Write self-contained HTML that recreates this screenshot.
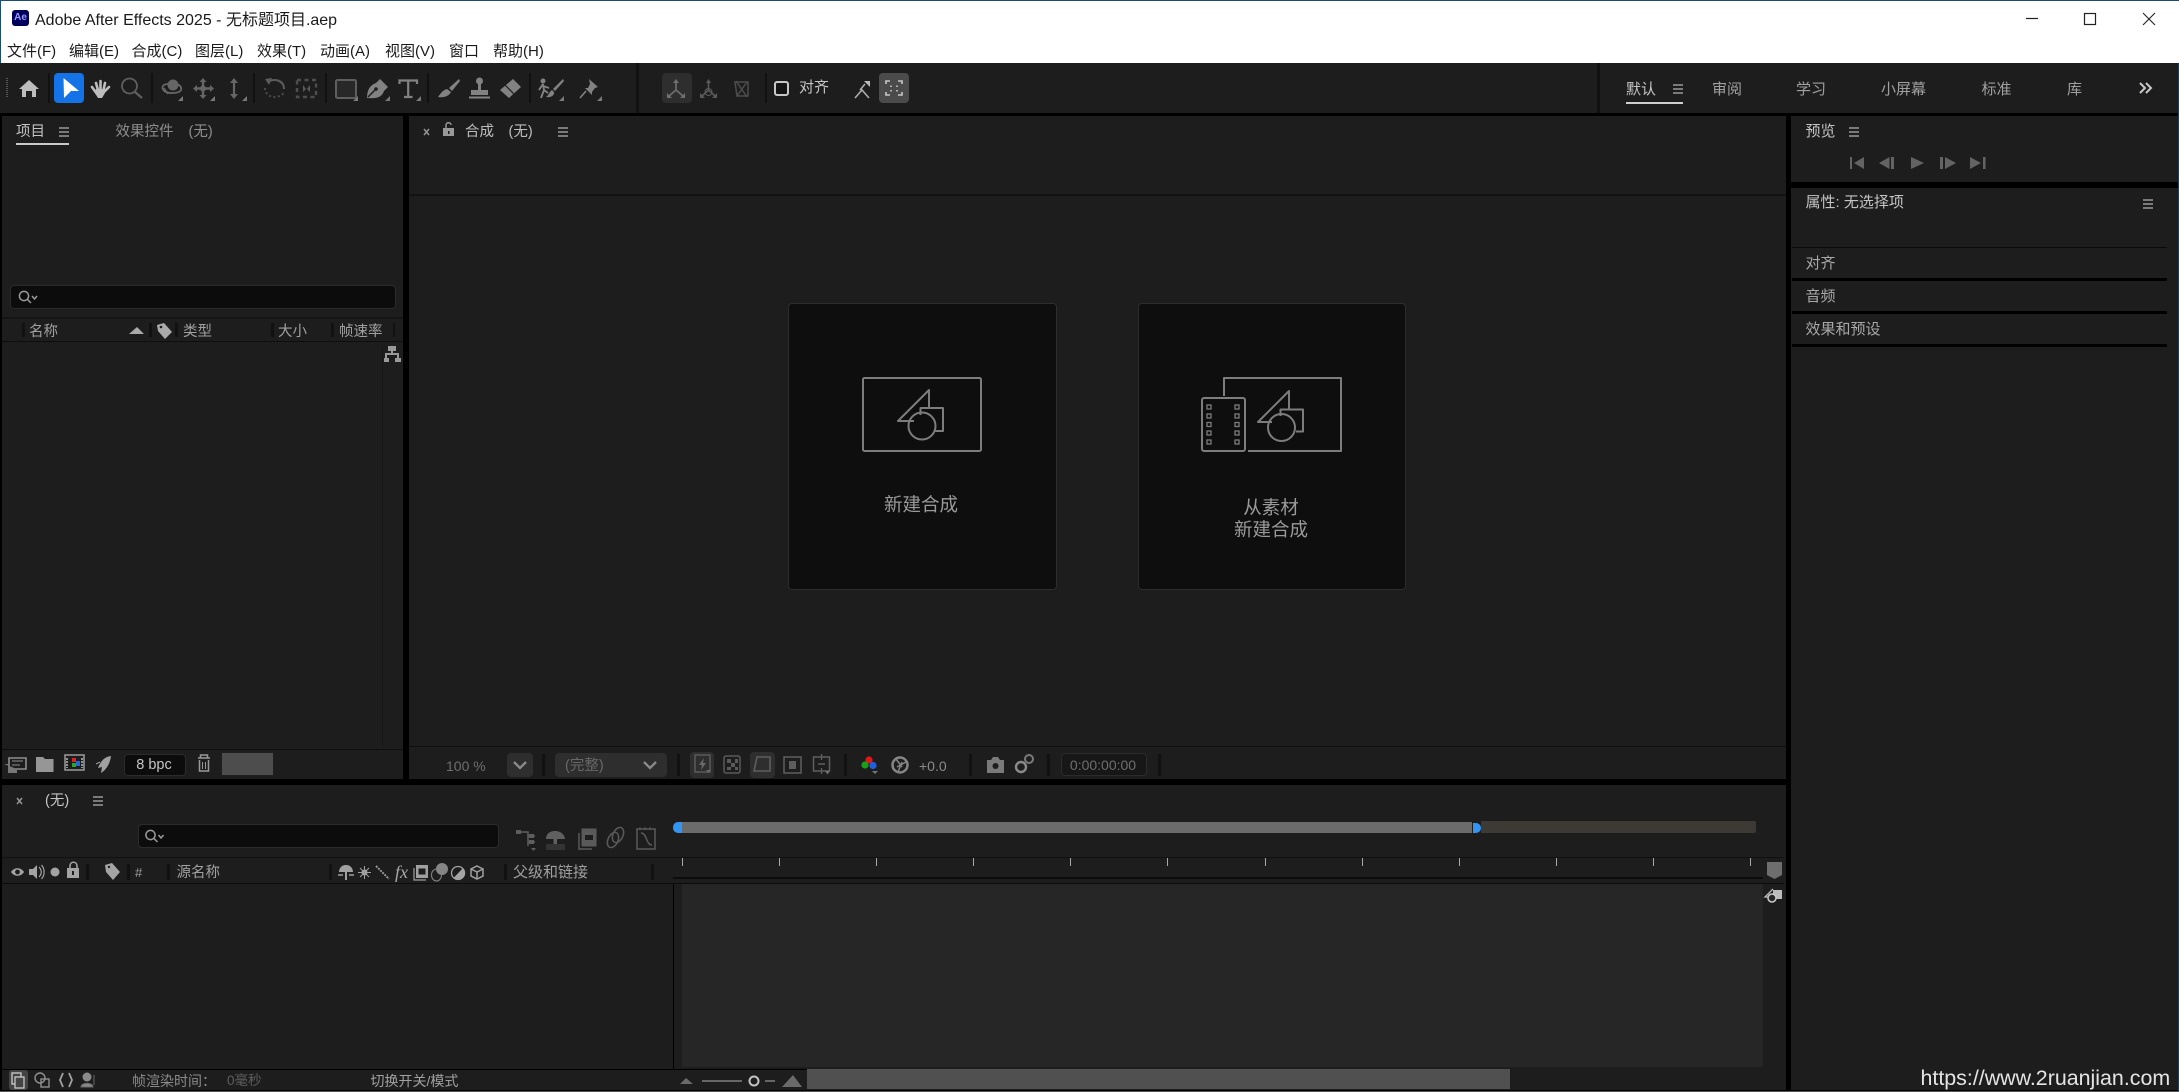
<!DOCTYPE html>
<html lang="zh"><head><meta charset="utf-8"><title>Adobe After Effects 2025</title>
<style>
html,body{margin:0;padding:0;background:#000;width:2179px;height:1092px;overflow:hidden}
body{position:relative;font-family:"Liberation Sans","Noto Sans CJK SC",sans-serif;font-size:14.5px;color:#b0b0b0}
.b{position:absolute;box-sizing:border-box}
.t{position:absolute;white-space:nowrap;line-height:20px;height:20px;margin-top:1px;margin-left:-1px}
.h{position:absolute;width:10px;height:10px;background:repeating-linear-gradient(#7a7a7a 0 2px,transparent 2px 4px)}
.s{position:absolute;background:#111;width:3px}
.m{color:#1a1a1a;font-size:15px}
.d{color:#8e8e8e}.l{color:#c4c4c4}
.i{position:absolute;left:0;top:0}
</style></head><body>
<!-- title bar -->
<div class="b" style="left:0;top:0;width:2179px;height:63px;background:#fff"></div>
<div class="b" style="left:0;top:0;width:2179px;height:1px;background:#1b4d6e"></div>
<div class="b" style="left:0;top:0;width:1px;height:63px;background:#1b4d6e"></div>
<div class="b" style="left:12px;top:10px;width:17px;height:16px;background:#00005b;border-radius:3px;color:#9a9aff;font-size:10px;font-weight:bold;text-align:center;line-height:16px">Ae</div>
<div class="t" style="left:35px;top:10px;font-size:16px;color:#1a1a1a;margin-left:0">Adobe After Effects 2025 - 无标题项目.aep</div>
<div class="t m" style="left:8px;top:41px">文件(F)</div>
<div class="t m" style="left:70px;top:41px">编辑(E)</div>
<div class="t m" style="left:132.5px;top:41px">合成(C)</div>
<div class="t m" style="left:196px;top:41px">图层(L)</div>
<div class="t m" style="left:258px;top:41px">效果(T)</div>
<div class="t m" style="left:321px;top:41px">动画(A)</div>
<div class="t m" style="left:386px;top:41px">视图(V)</div>
<div class="t m" style="left:450px;top:41px">窗口</div>
<div class="t m" style="left:494px;top:41px">帮助(H)</div>

<!-- toolbar -->
<div class="b" style="left:0;top:63px;width:2179px;height:50px;background:#1d1d1d"></div>
<div class="b" style="left:54px;top:73px;width:30px;height:30px;background:#1473e6;border-radius:4px"></div>
<div class="b" style="left:662px;top:73px;width:30px;height:30px;background:#2e2e2e;border-radius:4px"></div>
<div class="b" style="left:879px;top:73px;width:30px;height:30px;background:#4b4b4b;border-radius:4px"></div>
<div class="s" style="left:636px;top:63px;height:50px"></div>
<div class="s" style="left:1597px;top:63px;height:50px"></div>
<div class="s" style="left:48px;top:73px;height:30px;width:2px"></div>
<div class="s" style="left:151px;top:73px;height:30px;width:2px"></div>
<div class="s" style="left:253px;top:73px;height:30px;width:2px"></div>
<div class="s" style="left:325px;top:73px;height:30px;width:2px"></div>
<div class="s" style="left:427px;top:73px;height:30px;width:2px"></div>
<div class="s" style="left:529px;top:73px;height:30px;width:2px"></div>
<div class="s" style="left:765px;top:73px;height:30px;width:2px"></div>
<div class="b" style="left:774px;top:81px;width:15px;height:15px;border:2.5px solid #c8c8c8;border-radius:3px;background:#151515"></div>
<div class="t l" style="left:800px;top:77px;font-size:15px">对齐</div>
<div class="t l" style="left:1627px;top:78.5px;font-size:15px">默认</div>
<div class="h" style="left:1673px;top:84px"></div>
<div class="b" style="left:1626px;top:102px;width:57px;height:2px;background:#d0d0d0"></div>
<div class="t d" style="left:1713px;top:78.5px;font-size:15px;color:#a0a0a0">审阅</div>
<div class="t d" style="left:1797px;top:78.5px;font-size:15px;color:#a0a0a0">学习</div>
<div class="t d" style="left:1882px;top:78.5px;font-size:15px;color:#a0a0a0">小屏幕</div>
<div class="t d" style="left:1982.5px;top:78.5px;font-size:15px;color:#a0a0a0">标准</div>
<div class="t d" style="left:2068px;top:78.5px;font-size:15px;color:#a0a0a0">库</div>

<!-- project panel -->
<div class="b" style="left:2px;top:116px;width:401px;height:663px;background:#1d1d1d"></div>
<div class="t l" style="left:17px;top:121px">项目</div>
<div class="h" style="left:59px;top:127px"></div>
<div class="b" style="left:16px;top:143px;width:53px;height:2px;background:#c8c8c8"></div>
<div class="t d" style="left:116.5px;top:121px">效果控件</div>
<div class="t d" style="left:189.5px;top:121px">(无)</div>
<div class="b" style="left:10px;top:285px;width:386px;height:24px;background:#0c0c0c;border:1px solid #2b2b2b;border-radius:4px"></div>
<div class="b" style="left:2px;top:317px;width:401px;height:2px;background:#151515"></div>
<div class="b" style="left:2px;top:341px;width:401px;height:1px;background:#0e0e0e"></div>
<div class="s" style="left:22px;top:323px;height:14px"></div>
<div class="s" style="left:149px;top:323px;height:14px"></div>
<div class="s" style="left:175px;top:323px;height:14px"></div>
<div class="s" style="left:271px;top:323px;height:14px"></div>
<div class="s" style="left:331px;top:323px;height:14px"></div>
<div class="s" style="left:393px;top:323px;height:14px;width:2px"></div>
<div class="t d" style="left:30px;top:321px;color:#a0a0a0">名称</div>
<div class="t d" style="left:184px;top:321px;color:#a0a0a0">类型</div>
<div class="t d" style="left:279px;top:321px;color:#a0a0a0">大小</div>
<div class="t d" style="left:340px;top:321px;color:#a0a0a0">帧速率</div>
<div class="b" style="left:382px;top:346px;width:1px;height:400px;background:#161616"></div>
<div class="b" style="left:2px;top:749px;width:401px;height:1px;background:#0e0e0e"></div>
<div class="b" style="left:123.5px;top:754px;width:62.5px;height:22px;background:#0c0c0c;border:1px solid #2b2b2b;border-radius:4px"></div>
<div class="t l" style="left:124px;top:754px;width:62px;text-align:center">8 bpc</div>
<div class="b" style="left:222px;top:753px;width:51px;height:22px;background:#4d4d4d"></div>

<!-- comp panel -->
<div class="b" style="left:409px;top:116px;width:1377px;height:663px;background:#1d1d1d"></div>
<div class="t" style="left:466px;top:121px;color:#bdbdbd">合成</div>
<div class="t" style="left:509.5px;top:121px;color:#bdbdbd">(无)</div>
<div class="h" style="left:558px;top:127px"></div>
<div class="b" style="left:409px;top:194px;width:1377px;height:2px;background:#131313"></div>
<div class="b" style="left:788px;top:302.5px;width:268.5px;height:287px;background:#0e0e0e;border:1px solid #2d2d2d;border-radius:4px"></div>
<div class="b" style="left:1137.5px;top:302.5px;width:268.5px;height:287px;background:#0e0e0e;border:1px solid #2d2d2d;border-radius:4px"></div>
<div class="t" style="left:788px;top:494px;width:268px;text-align:center;font-size:18.5px;color:#9a9a9a">新建合成</div>
<div class="t" style="left:1138px;top:497px;width:268px;text-align:center;font-size:18.5px;color:#9a9a9a">从素材</div>
<div class="t" style="left:1138px;top:518.5px;width:268px;text-align:center;font-size:18.5px;color:#9a9a9a">新建合成</div>
<div class="b" style="left:409px;top:746px;width:1377px;height:1px;background:#101010"></div>
<div class="t" style="left:447px;top:755px;font-size:14px;color:#6e6e6e">100 %</div>
<div class="b" style="left:507px;top:753px;width:26px;height:24px;background:#2e2e2e;border-radius:4px"></div>
<div class="b" style="left:555px;top:753px;width:112px;height:24px;background:#2e2e2e;border-radius:4px"></div>
<div class="t" style="left:566px;top:755px;color:#686868">(完整)</div>
<div class="b" style="left:690px;top:752px;width:24px;height:26px;background:#2e2e2e;border-radius:4px"></div>
<div class="b" style="left:750px;top:752px;width:25px;height:26px;background:#2e2e2e;border-radius:4px"></div>
<div class="s" style="left:542px;top:754px;height:22px"></div>
<div class="s" style="left:677px;top:754px;height:22px"></div>
<div class="s" style="left:844px;top:754px;height:22px"></div>
<div class="s" style="left:969px;top:754px;height:22px"></div>
<div class="s" style="left:1047px;top:754px;height:22px"></div>
<div class="s" style="left:1158px;top:754px;height:22px"></div>
<div class="t" style="left:920px;top:755px;font-size:14px;color:#8a8a8a">+0.0</div>
<div class="b" style="left:1061px;top:753px;width:86px;height:23px;background:#171717;border:1px solid #2b2b2b;border-radius:4px"></div>
<div class="t" style="left:1061px;top:754px;width:86px;text-align:center;font-size:14px;color:#6e6e6e">0:00:00:00</div>

<!-- right panels -->
<div class="b" style="left:1791px;top:116px;width:387px;height:66px;background:#1d1d1d"></div>
<div class="t l" style="left:1806.5px;top:120.5px;font-size:15px">预览</div>
<div class="h" style="left:1849px;top:127px"></div>
<div class="b" style="left:1791px;top:188px;width:387px;height:902px;background:#1d1d1d"></div>
<div class="t l" style="left:1806.5px;top:191.5px;font-size:15px">属性: 无选择项</div>
<div class="h" style="left:2143px;top:199px"></div>
<div class="b" style="left:1792px;top:247px;width:375px;height:1px;background:#0a0a0a"></div>
<div class="t" style="left:1806.5px;top:253px;font-size:15px;color:#a8a8a8">对齐</div>
<div class="b" style="left:1792px;top:278px;width:375px;height:3px;background:#000"></div>
<div class="t" style="left:1806.5px;top:286px;font-size:15px;color:#a8a8a8">音频</div>
<div class="b" style="left:1792px;top:311px;width:375px;height:3px;background:#000"></div>
<div class="t" style="left:1806.5px;top:319px;font-size:15px;color:#a8a8a8">效果和预设</div>
<div class="b" style="left:1792px;top:344px;width:375px;height:3px;background:#000"></div>

<!-- timeline panel -->
<div class="b" style="left:2px;top:785px;width:1784px;height:305px;background:#1d1d1d"></div>
<div class="t" style="left:46px;top:790px;color:#c4c4c4">(无)</div>
<div class="h" style="left:93px;top:796px"></div>
<div class="b" style="left:138px;top:824px;width:361px;height:24px;background:#0c0c0c;border:1px solid #2b2b2b;border-radius:4px"></div>
<div class="b" style="left:2px;top:857px;width:1782px;height:1px;background:#111"></div>
<div class="b" style="left:2px;top:883px;width:1782px;height:1px;background:#0c0c0c"></div>
<div class="b" style="left:673px;top:877px;width:1090px;height:2px;background:#0c0c0c"></div>
<div class="s" style="left:86px;top:864px;height:16px"></div>
<div class="s" style="left:127px;top:864px;height:16px"></div>
<div class="s" style="left:167px;top:864px;height:16px"></div>
<div class="s" style="left:329px;top:864px;height:16px"></div>
<div class="s" style="left:504px;top:864px;height:16px"></div>
<div class="s" style="left:651px;top:864px;height:16px"></div>
<div class="t d" style="left:136px;top:862px;color:#a0a0a0;font-size:13px">#</div>
<div class="t" style="left:177.5px;top:862px;color:#a0a0a0">源名称</div>
<div class="t" style="left:514px;top:862px;color:#a0a0a0;font-size:15px">父级和链接</div>
<div class="b" style="left:673px;top:822px;width:9px;height:11px;background:#3196f3;border-radius:5px 0 0 5px"></div>
<div class="b" style="left:682px;top:822px;width:790px;height:11px;background:#6b6b6b"></div>
<div class="b" style="left:1473px;top:823px;width:8px;height:10px;background:#3196f3;border-radius:0 5px 5px 0"></div>
<div class="b" style="left:1481px;top:821px;width:275px;height:12px;background:#3d3a35;border-radius:0 2px 2px 0"></div>
<div class="b" style="left:682px;top:884px;width:1081px;height:183px;background:#262626"></div>
<div class="b" style="left:673px;top:884px;width:1px;height:185px;background:#000"></div>
<div class="b" style="left:2px;top:1069px;width:1170px;height:1px;background:#000"></div>
<div class="b" style="left:8.5px;top:1070px;width:19px;height:20px;background:#444;border-radius:3px"></div>
<div class="t" style="left:133px;top:1069.5px;color:#8a8a8a;font-size:14px">帧渲染时间：</div>
<div class="t" style="left:228px;top:1069.5px;color:#5e5e5e;font-size:13.5px">0毫秒</div>
<div class="t" style="left:371.5px;top:1069.5px;color:#a0a0a0;font-size:14px">切换开关/模式</div>
<div class="b" style="left:807px;top:1069px;width:703px;height:20px;background:#505050"></div>
<div class="t" style="left:1920.5px;top:1066.5px;font-size:21.4px;color:#e4e4e4;z-index:3;margin-left:0">https://www.2ruanjian.com</div>
<div class="b" style="left:2178px;top:63px;width:1px;height:1029px;background:#1b3f5e"></div>
<div class="b" style="left:0;top:1091px;width:2179px;height:1px;background:#555"></div>

<!-- icons -->
<svg class="i" width="2179" height="1092" viewBox="0 0 2179 1092" fill="none">
<!-- card 1 icon -->
<g stroke="#7d7d7d" stroke-width="2" stroke-linejoin="round">
<rect x="863" y="378" width="118" height="73" rx="1.5"/>
<path d="M929 408V390L898 421H914"/>
<path d="M920.5 415V408H943V431H935.5"/>
<circle cx="922" cy="426" r="13.5"/>
</g>
<!-- card 2 icon -->
<g stroke="#7d7d7d" stroke-width="2" stroke-linejoin="round">
<path d="M1224 396V378H1341V451H1248"/>
<rect x="1202" y="398" width="43" height="53" rx="2"/>
<path d="M1289 409V391L1258 422H1272"/>
<path d="M1280.5 416V409.5H1303V431.5H1296"/>
<circle cx="1281.5" cy="427.5" r="13.5"/>
</g>
<g stroke="#7d7d7d" stroke-width="1.3">
<rect x="1207" y="405" width="4" height="4"/><rect x="1207" y="414" width="4" height="4"/><rect x="1207" y="422.5" width="4" height="4"/><rect x="1207" y="431" width="4" height="4"/><rect x="1207" y="440" width="4" height="4"/>
<rect x="1235" y="405" width="4" height="4"/><rect x="1235" y="414" width="4" height="4"/><rect x="1235" y="422.5" width="4" height="4"/><rect x="1235" y="431" width="4" height="4"/><rect x="1235" y="440" width="4" height="4"/>
</g>
<!-- window controls -->
<path d="M2026 18.5H2038" stroke="#222" stroke-width="1.2"/>
<rect x="2084.5" y="13.5" width="11" height="11" stroke="#222" stroke-width="1.2"/>
<path d="M2143 13L2155 25M2155 13L2143 25" stroke="#222" stroke-width="1.1"/>
<!-- grip -->
<path d="M7 78V97" stroke="#555" stroke-width="2" stroke-dasharray="1 1"/>
<!-- home -->
<path d="M19 89L29 80L39 89H36V97H32V91H26V97H22V89Z" fill="#bdbdbd"/>
<!-- arrow -->
<path d="M63.5 78L79 91H71L64 98Z" fill="#fff"/>
<!-- hand -->
<path d="M92 87L97 94M96 83L98 90M100.5 81V90M105 83L103.5 90M109 87L104 92" stroke="#bdbdbd" stroke-width="2.6" stroke-linecap="round"/>
<path d="M96 89H105V93L102 98H98L95 93Z" fill="#bdbdbd"/>
<!-- zoom -->
<circle cx="129.5" cy="86" r="7.5" stroke="#5e5e5e" stroke-width="1.8"/><path d="M135 92L142 98" stroke="#5e5e5e" stroke-width="2.2"/>
<!-- roto orbit -->
<circle cx="173" cy="85" r="5.5" fill="#666"/><path d="M168 84C161 84 161 90 166 92C171 94 180 93 181 90C182 87 179 84 176 84" stroke="#666" stroke-width="1.8"/>
<path d="M164 88L168 94" stroke="#666" stroke-width="1.5"/>
<!-- pan -->
<path d="M203 80V97M195 88.5H212" stroke="#666" stroke-width="2.4"/>
<path d="M203 78L206.5 82H199.5ZM203 99L206.5 95H199.5ZM193 88.5L197 85V92ZM214 88.5L210 85V92Z" fill="#666"/>
<circle cx="203" cy="88.5" r="3" fill="#666"/>
<!-- dolly -->
<path d="M234 81V96" stroke="#666" stroke-width="2.2"/><path d="M234 78L238 83H230ZM234 99L238 94H230Z" fill="#666"/>
<!-- rotate -->
<path d="M268 82C274 78 284 80 284 89" stroke="#5c5c5c" stroke-width="2"/>
<path d="M265 79L272 78L269 85Z" fill="#5c5c5c"/>
<path d="M265 88C265 96 275 101 284 93" stroke="#4c4c4c" stroke-width="2" stroke-dasharray="2 2.5"/>
<!-- scale -->
<rect x="297" y="80" width="19" height="17" stroke="#4e4e4e" stroke-width="2.4" stroke-dasharray="4 3.5"/>
<path d="M303 85L306 89L303 92ZM310 85L307 89L310 92Z" fill="#5a5a5a"/>
<!-- rect -->
<rect x="336" y="80" width="20" height="18" rx="1.5" fill="#282828" stroke="#5e5e5e" stroke-width="2"/>
<!-- pen -->
<path d="M367 98C367 90 370 85 376 83L380 79L388 87L384 91C382 97 377 99 367 98Z" fill="#828282"/><path d="M368 97L375 90" stroke="#1d1d1d" stroke-width="1.4"/><circle cx="376" cy="89" r="1.8" fill="#1d1d1d"/>
<!-- T -->
<path d="M399.5 84V80.5H417V84M408.2 81V96.5M404 97H412.5" stroke="#828282" stroke-width="2.2"/>
<!-- brush -->
<path d="M459 79L449 88L452 91L460 81Z" fill="#828282"/><path d="M447 89C443 90 441 93 438 97C444 98 449 96 451 92Z" fill="#828282"/>
<!-- stamp -->
<circle cx="479.5" cy="81" r="3.5" fill="#828282"/><path d="M478 84H481V90H488V95H471V90H478ZM469 96.5H490V98.5H469Z" fill="#828282"/>
<!-- eraser -->
<path d="M513 79L521 87L509 98L500 90Z" fill="#828282"/><path d="M505 85L514 94" stroke="#1d1d1d" stroke-width="1.2"/>
<!-- roto brush -->
<circle cx="543" cy="81" r="2.5" fill="#828282"/><path d="M543 84L539 90M543 84L544 90L541 98M544 90L548 93M543 86L549 88" stroke="#828282" stroke-width="1.9"/>
<path d="M563 79L553 89L555 91L564 81ZM552 90C549 92 549 95 546 97C551 98 555 95 554 92Z" fill="#828282"/>
<!-- pin -->
<path d="M589 79L598 87L595 88L592 92L592 95L585 88L588 88L590 84Z" fill="#828282"/><path d="M586 91L580 98" stroke="#828282" stroke-width="1.6"/>
<!-- flyout triangles -->
<path d="M178 101H183V96ZM210 101H215V96ZM242 101H247V96ZM353 101H358V96ZM385 101H390V96ZM416 101H421V96ZM559 101H564V96ZM597 101H602V96Z" fill="#7a7a7a"/>
<!-- axis -->
<path d="M676 82V90M676 90L669 96M676 90L683 96" stroke="#707070" stroke-width="1.6"/><path d="M676 79L679 83H673ZM667 98V93L672 98ZM685 98V93L680 98Z" fill="#707070"/>
<path d="M708.5 82V90M708.5 90L702 96M708.5 90L715 96" stroke="#5a5a5a" stroke-width="1.6"/><circle cx="708.5" cy="92" r="3.5" stroke="#5a5a5a"/><path d="M708.5 79L711 83H706ZM700 98V93L705 98ZM717 98V93L712 98Z" fill="#5a5a5a"/>
<path d="M735 82L748 82V96L737 96ZM736 81L747 97M747 82L737 96" stroke="#4c4c4c" stroke-width="1.5"/>
<path d="M855 98L862 90L869 98M860 90L865 84" stroke="#aaa" stroke-width="1.6"/><path d="M864 81H870V87Z" fill="#bbb"/>
<path d="M886 84V81H890M898 81H902V84M886 92V95H890M898 95H902V92" stroke="#c8c8c8" stroke-width="1.6"/><path d="M891 85.5V87M897 85.5V87M891 90V91.5M897 90V91.5" stroke="#c8c8c8" stroke-width="1.6"/>
<!-- workspace chevrons -->
<path d="M2140 83L2145 88L2140 93M2146 83L2151 88L2146 93" stroke="#c8c8c8" stroke-width="2"/>
<!-- tab close & lock -->
<path d="M424 129L429 135M429 129L424 135" stroke="#999" stroke-width="1.4"/>
<path d="M446 128V125C446 122 451 122 451 125" stroke="#999" stroke-width="1.4"/><rect x="443" y="128" width="11" height="8" fill="#999"/><rect x="448" y="131" width="1.5" height="3" fill="#1d1d1d"/>
<path d="M17 798L22 804M22 798L17 804" stroke="#999" stroke-width="1.4"/>
<!-- transport -->
<path d="M1850 157H1852V169H1850ZM1864 157V169L1854 163Z" fill="#636363"/>
<path d="M1891 157H1894V169H1891ZM1889.5 157V169L1879 163Z" fill="#636363"/>
<path d="M1911 157V169L1924 163Z" fill="#636363"/>
<path d="M1940 157H1943V169H1940ZM1945 157V169L1956 163Z" fill="#636363"/>
<path d="M1970 157V169L1981 163ZM1983 157H1985.5V169H1983Z" fill="#636363"/>
<!-- search icons -->
<g stroke="#999" stroke-width="1.5"><circle cx="24" cy="296" r="4.6"/><path d="M27.5 299.5L31 303M32 296L34.5 299L37 296"/></g>
<g stroke="#999" stroke-width="1.5"><circle cx="150.5" cy="835" r="4.6"/><path d="M154 838.5L157.5 842M158.5 835L161 838L163.5 835"/></g>
<!-- project header -->
<path d="M129 334L137 327L144 334Z" fill="#aaa"/>
<path d="M157 325L164 323L172 332L165 339L158 331Z" fill="#aaa"/><circle cx="161" cy="327" r="1.3" fill="#1d1d1d"/>
<path d="M388 346H396V351H393V353H399V358H401V362H395V358H397V355H387V358H389V362H384V358H385V353H391V351H388Z" fill="#999"/>
<!-- project footer -->
<path d="M9 758H26V769H9Z" stroke="#8e8e8e" stroke-width="1.6"/><path d="M12 761H23M12 765H20" stroke="#8e8e8e"/><path d="M4 764H8V773H17V769" fill="#777"/>
<path d="M36 757H43L45 759H53.5V772H36Z" fill="#969696"/>
<rect x="65" y="755" width="19" height="15" stroke="#949494" stroke-width="1.6"/><path d="M67 758V768M82 758V768" stroke="#949494" stroke-width="2" stroke-dasharray="2 1"/><rect x="72" y="758" width="4" height="4" fill="#d22"/><rect x="72" y="763" width="4" height="4" fill="#2a2"/><rect x="76" y="761" width="4" height="5" fill="#26d"/>
<path d="M111 756C103 757 100 763 98 768L102 767L101 773C106 770 110 764 111 756Z" fill="#a0a0a0"/><path d="M96 764L100 762" stroke="#a0a0a0"/>
<path d="M198 758H210M200.5 758V755H207.5V758M199.5 760V771H208.5V760" stroke="#999" stroke-width="1.5"/><path d="M202.5 762V769M205.5 762V769" stroke="#999"/>
<!-- comp footer -->
<path d="M514 762L520 768L526 762M644 762L650 768L656 762" stroke="#8a8a8a" stroke-width="2.3"/>
<path d="M695 755H710V772H695Z" stroke="#5a5a5a" stroke-width="1.5"/><path d="M704 758L699 765H702L701 770L706 763H703Z" fill="#6a6a6a"/><path d="M706 770H711L708.5 773Z" fill="#6a6a6a"/>
<rect x="724" y="756" width="16" height="17" rx="2" stroke="#5a5a5a" stroke-width="1.5"/><path d="M727 759H731V763H727ZM735 759H738V763H735ZM731 763H735V767H731ZM727 767H731V770H727ZM735 767H738V770H735Z" fill="#5a5a5a"/>
<path d="M757 757H770V771H754Z" stroke="#5e5e5e" stroke-width="1.6"/>
<rect x="784" y="757" width="17" height="16" stroke="#5e5e5e" stroke-width="1.5"/><rect x="789" y="761" width="7" height="8" fill="#5e5e5e"/>
<rect x="813.5" y="757" width="16" height="14" stroke="#5e5e5e" stroke-width="1.5"/><path d="M821.5 754V760M821.5 768V774M818 764H825" stroke="#5e5e5e" stroke-width="1.4"/><path d="M825 771H830L827.5 774.5Z" fill="#707070"/>
<circle cx="869" cy="760" r="3.6" fill="#e01818"/><circle cx="865" cy="765" r="3.6" fill="#18a018"/><circle cx="873" cy="765.5" r="3.6" fill="#2060e0"/>
<path d="M872 771H878L875 774Z" fill="#777"/>
<circle cx="900" cy="765" r="7.5" stroke="#858585" stroke-width="2.5"/><path d="M896 759L902 767M906 762L897 767M898 772L902 762" stroke="#858585" stroke-width="1.5"/>
<path d="M987 760H991L993 757H998L1000 760H1004V773H987Z" fill="#7a7a7a"/><circle cx="995.5" cy="766" r="3" fill="#1d1d1d"/>
<circle cx="1021" cy="767" r="5" stroke="#8a8a8a" stroke-width="2.4"/><circle cx="1029" cy="759" r="4" stroke="#7a7a7a" stroke-width="2"/>
<!-- timeline controls -->
<path d="M517 832H524M524 832H528V846M528 836H535M528 842H535" stroke="#5e5e5e" stroke-width="1.5"/><rect x="516" y="830" width="5" height="4" fill="#5e5e5e"/><rect x="529" y="834" width="5" height="4" fill="#5e5e5e"/><rect x="529" y="840" width="5" height="4" fill="#5e5e5e"/><path d="M531 848H536L533.5 851Z" fill="#5e5e5e"/>
<path d="M555 831C548 831 546 836 546 839H565C565 836 562 831 555 831ZM553.5 839H557V846H553.5Z" fill="#606060"/><path d="M546 844H565V850H546Z" fill="#333"/>
<rect x="582" y="829" width="14" height="17" fill="#5a5a5a" stroke="#5a5a5a"/><rect x="585" y="835" width="8" height="5" fill="#1d1d1d"/><path d="M579 833V849H592" stroke="#5a5a5a" stroke-width="1.5"/>
<ellipse cx="618" cy="835" rx="5" ry="8" transform="rotate(25 618 835)" stroke="#5a5a5a" stroke-width="1.5"/><ellipse cx="613" cy="840" rx="5" ry="8" transform="rotate(25 613 840)" stroke="#5a5a5a" stroke-width="1.5"/>
<rect x="637" y="829" width="18" height="20" stroke="#5a5a5a" stroke-width="1.5"/><path d="M641 833C647 833 646 845 652 845" stroke="#5a5a5a" stroke-width="1.5"/><path d="M640 827V830M645 827V830M650 827V830" stroke="#5a5a5a"/>
<!-- timeline header icons -->
<path d="M11 872C14 867 21 867 24 872C21 877 14 877 11 872Z" fill="#a4a4a4"/><circle cx="17.5" cy="872" r="2.4" fill="#1d1d1d"/>
<path d="M29 869H33L37 865V879L33 875H29Z" fill="#a4a4a4"/><path d="M39 867C42 870 42 874 39 877M41.5 865C45 869 45 875 41.5 879" stroke="#a4a4a4" stroke-width="1.2"/>
<circle cx="55" cy="872" r="4.5" fill="#a4a4a4"/>
<path d="M70 868V866C70 861 77 861 77 866V868" stroke="#a4a4a4" stroke-width="1.6"/><rect x="67" y="868" width="12" height="10" fill="#a4a4a4"/><rect x="72" y="871" width="2" height="4" fill="#1d1d1d"/>
<path d="M105 865L112 863L120 872L113 880L106 872Z" fill="#a4a4a4"/><circle cx="109" cy="867" r="1.2" fill="#1d1d1d"/>
<path d="M346 865C341 865 339 869 339 872H353C353 869 351 865 346 865ZM345 872H347V880H345Z" fill="#a0a0a0"/><path d="M338 875H343M349 875H354" stroke="#a0a0a0" stroke-width="1.4"/>
<circle cx="364.5" cy="872.5" r="3" fill="#a0a0a0"/><path d="M364.5 866V879M358 872.5H371M360 868L369 877M369 868L360 877" stroke="#a0a0a0"/>
<path d="M376 866L389 879" stroke="#a0a0a0" stroke-width="1.8" stroke-dasharray="2 1"/>
<text x="395" y="878" font-family="Liberation Serif,serif" font-style="italic" font-size="18" fill="#a8a8a8">fx</text>
<rect x="416" y="865" width="12" height="13" fill="#a0a0a0"/><rect x="418.5" y="868.5" width="7" height="6" fill="#1d1d1d"/><path d="M414 868V880H426" stroke="#a0a0a0" stroke-width="1.2"/>
<circle cx="442" cy="869" r="6" fill="#858585"/><ellipse cx="436.5" cy="875" rx="5" ry="6" stroke="#858585"/>
<circle cx="458" cy="873" r="6.5" stroke="#a4a4a4" stroke-width="1.3"/><path d="M463 868A6.5 6.5 0 0 1 453.5 878Z" fill="#a4a4a4"/>
<path d="M477 866L483 869V876L477 879L471 876V869ZM471 869L477 872L483 869M477 872V879" stroke="#a0a0a0" stroke-width="1.5"/>
<!-- ruler ticks -->
<path d="M682.5 858V866M779.5 858V866M876.5 858V866M973.5 858V866M1070.5 858V866M1167.5 858V866M1265.5 858V866M1362.5 858V866M1459.5 858V866M1556.5 858V866M1653.5 858V866M1750.5 858V866" stroke="#a8a8a8"/>
<!-- time marker -->
<path d="M1767 862H1782V875L1774.5 879L1767 875Z" fill="#6e6e6e"/>
<path d="M1773 889L1765 897H1770" stroke="#bbb" stroke-width="1.3"/><rect x="1773" y="890" width="9" height="9" fill="#bbb"/><circle cx="1772" cy="898" r="4" fill="#262626" stroke="#ccc" stroke-width="1.5"/>
<!-- status icons -->
<rect x="12" y="1073" width="9" height="11" stroke="#cfcfcf" stroke-width="1.3"/><path d="M15 1077H24V1088H15Z" fill="#444" stroke="#cfcfcf" stroke-width="1.2"/>
<circle cx="40" cy="1078" r="5" stroke="#909090" stroke-width="1.4"/><rect x="41" y="1079" width="8" height="8" stroke="#909090" stroke-width="1.4"/>
<path d="M63 1073L60 1080L63 1087M69 1073L72 1080L69 1087" stroke="#a0a0a0" stroke-width="1.8"/>
<circle cx="87" cy="1077" r="4.5" fill="#8a8a8a"/><path d="M81 1087C81 1082 93 1082 93 1087ZM94 1075V1085" fill="#8a8a8a" stroke="#666"/>
<path d="M680 1084L686 1078L693 1084Z" fill="#6a6a6a"/>
<path d="M702 1081H742M765 1081H775" stroke="#666" stroke-width="2"/>
<circle cx="754" cy="1081" r="4.5" stroke="#c4c4c4" stroke-width="2"/>
<path d="M782 1087L793 1075L802 1087Z" fill="#6a6a6a"/>
</svg>
</body></html>
